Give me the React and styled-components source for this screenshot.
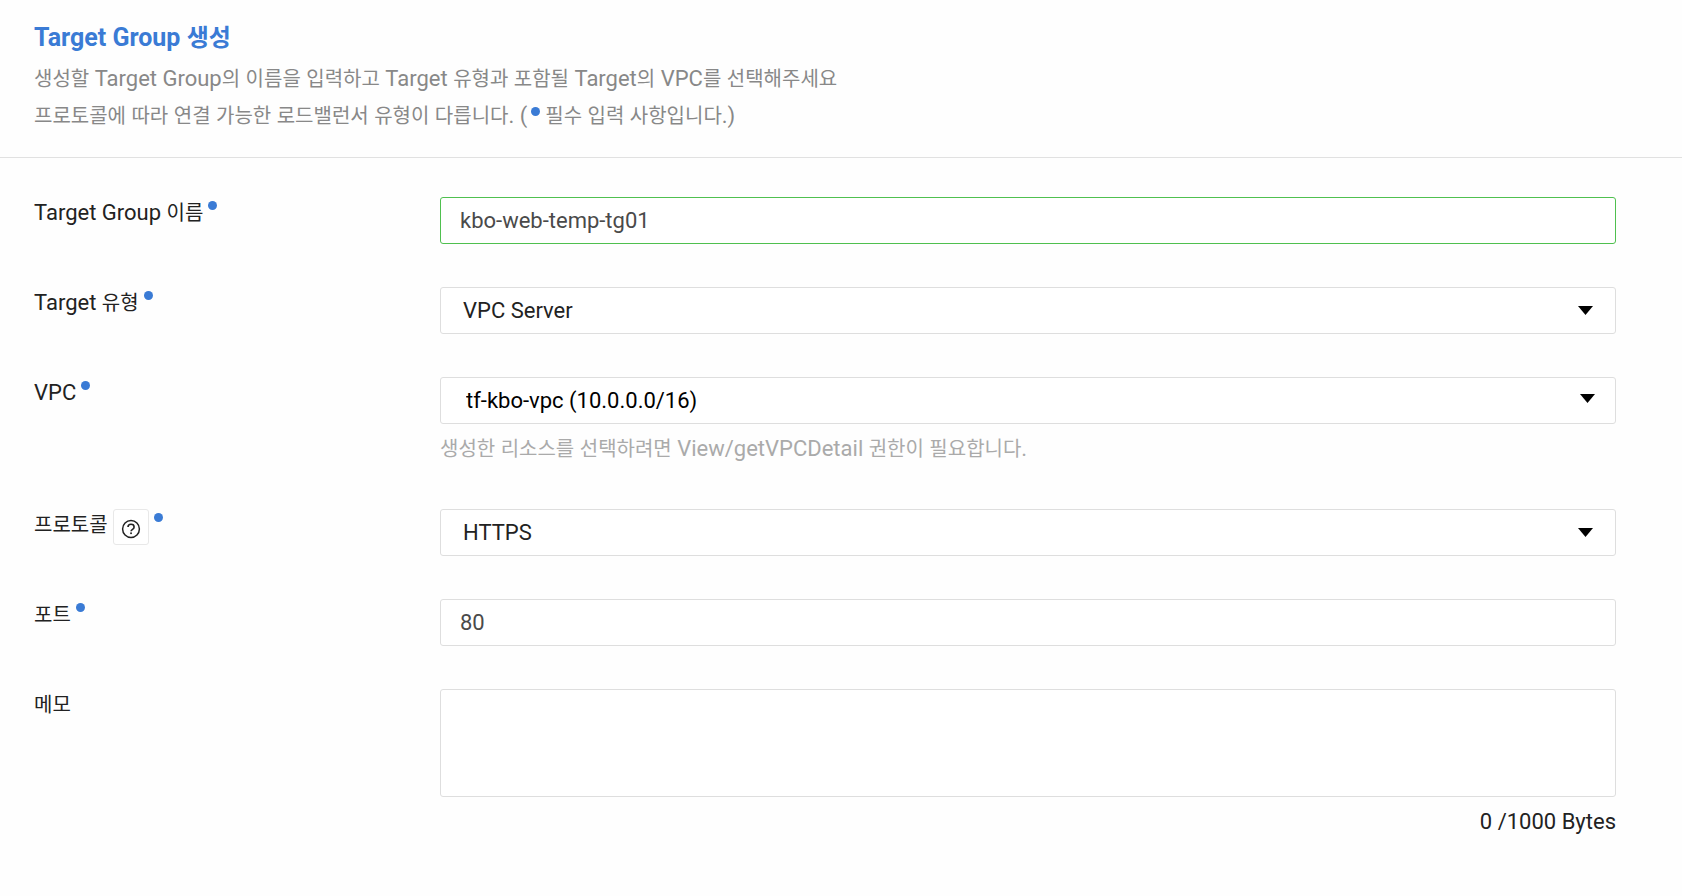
import React from "react";
import styled, { createGlobalStyle } from "styled-components";

const GlobalStyle = createGlobalStyle`
  *, *::before, *::after { box-sizing: border-box; }
  body {
    margin: 0;
    background: #fefefe;
    color: #222;
    font-family: Roboto, "Noto Sans CJK KR", sans-serif;
    font-size: 22px;
    line-height: 32px;
  }
`;

const Hangul = styled.span`
  font-size: ${(p) => (p.$large ? 24 : 20)}px;
  font-weight: ${(p) => (p.$large ? 700 : 400)};
  line-height: 1;
`;

const HANGUL_RUN = /([\uAC00-\uD7A3]+)/;

/* Hangul glyphs are set slightly smaller than the Latin text around them. */
function Mixed({ children, large }) {
  return children
    .split(HANGUL_RUN)
    .map((part, i) =>
      i % 2 ? <Hangul key={i} $large={large}>{part}</Hangul> : part
    );
}

const PageHeader = styled.header`
  padding: 21px 34px 23px;
  border-bottom: 1px solid #e1e1e1;
`;

const Title = styled.h1`
  margin: 0 0 5px;
  color: #3a7bd5;
  font-size: 25px;
  font-weight: 700;
  line-height: 34px;
`;

const Description = styled.p`
  margin: 0;
  color: #888;
  line-height: 37px;
`;

const Dot = styled.span`
  display: inline-block;
  flex: none;
  width: 9px;
  height: 9px;
  border-radius: 50%;
  background: #3a7bd5;
`;

const InlineDot = styled(Dot)`
  margin: 0 5px 0 4px;
  vertical-align: 7px;
`;

const LabelDot = styled(Dot)`
  margin-top: 4px;
`;

const Form = styled.form`
  display: flex;
  flex-direction: column;
  gap: 43px;
  padding: 39px 66px 56px 34px;
`;

const Row = styled.div`
  display: grid;
  grid-template-columns: 406px minmax(0, 1fr);
  align-items: start;
`;

const LabelCell = styled.div`
  display: flex;
  align-items: flex-start;
  gap: 5px;
`;

const Label = styled.label`
  white-space: nowrap;
`;

const HelpButton = styled.button`
  display: flex;
  justify-content: center;
  width: 36px;
  height: 36px;
  padding: 9px 0 0;
  border: 1px solid #e8e8e8;
  border-radius: 3px;
  background: #fff;
  color: #222;
`;

const Control = styled.div`
  display: flex;
  flex-direction: column;
`;

const Input = styled.input`
  width: 100%;
  height: 47px;
  padding: 0 19px;
  border: 1px solid ${(p) => (p.$valid ? "#4fc04f" : "#dedede")};
  border-radius: 3px;
  outline: none;
  background: #fff;
  color: #4a4a4a;
  font: inherit;
`;

const SelectBox = styled.div`
  display: grid;
  align-items: center;

  > * { grid-area: 1 / 1; }
`;

const Select = styled.select`
  appearance: none;
  width: 100%;
  height: 47px;
  padding: 0 50px 0 ${(p) => (p.$dark ? 25 : 22)}px;
  border: 1px solid #dedede;
  border-radius: 3px;
  background: #fff;
  color: ${(p) => (p.$dark ? "#000" : "#222")};
  font: inherit;
`;

const Arrow = styled.svg`
  justify-self: end;
  margin: ${(p) => (p.$dark ? "0 21px 4px 0" : "0 23px 0 0")};
  pointer-events: none;
`;

const Textarea = styled.textarea`
  display: block;
  width: 100%;
  height: 108px;
  padding: 10px 19px;
  border: 1px solid #dedede;
  border-radius: 3px;
  outline: none;
  resize: none;
  background: #fff;
  color: #4a4a4a;
  font: inherit;
`;

const Hint = styled.p`
  margin: 8px 0 0;
  color: #aaa;
  line-height: 34px;
`;

const Counter = styled.output`
  margin-top: 9px;
  text-align: right;
`;

function HelpIcon() {
  return (
    <svg width="20" height="20" viewBox="0 0 20 20" fill="none" aria-hidden="true">
      <circle cx="10" cy="10" r="8.4" stroke="currentColor" strokeWidth="1.5" />
      <path
        d="M7 8.1C7 6.3 8.3 5.3 10 5.3s3.1 1 3.1 2.6c0 1.3-.8 1.9-1.6 2.5-.9.6-1.4 1-1.4 1.9"
        stroke="currentColor"
        strokeWidth="1.6"
      />
      <rect x="9.2" y="13.4" width="1.7" height="1.7" fill="currentColor" />
    </svg>
  );
}

function Field({ id, label, required, help, hint, children }) {
  return (
    <Row>
      <LabelCell>
        <Label htmlFor={id}><Mixed>{label}</Mixed></Label>
        {help && (
          <HelpButton type="button" aria-label={help}><HelpIcon /></HelpButton>
        )}
        {required && <LabelDot />}
      </LabelCell>
      <Control>
        {children}
        {hint && <Hint><Mixed>{hint}</Mixed></Hint>}
      </Control>
    </Row>
  );
}

function Dropdown({ id, value, dark }) {
  return (
    <SelectBox>
      <Select id={id} defaultValue={value} $dark={dark}>
        <option>{value}</option>
      </Select>
      <Arrow $dark={dark} width="15" height="9" viewBox="0 0 15 9" aria-hidden="true">
        <path d="M0 0h15L7.5 9z" fill="#000" />
      </Arrow>
    </SelectBox>
  );
}

export default function App() {
  return (
    <main>
      <GlobalStyle />
      <PageHeader>
        <Title><Mixed large>Target Group 생성</Mixed></Title>
        <Description>
          <Mixed>생성할 Target Group의 이름을 입력하고 Target 유형과 포함될 Target의 VPC를 선택해주세요</Mixed>
        </Description>
        <Description>
          <Mixed>프로토콜에 따라 연결 가능한 로드밸런서 유형이 다릅니다. (</Mixed>
          <InlineDot />
          <Mixed>필수 입력 사항입니다.)</Mixed>
        </Description>
      </PageHeader>
      <Form>
        <Field id="name" label="Target Group 이름" required>
          <Input id="name" type="text" defaultValue="kbo-web-temp-tg01" $valid />
        </Field>
        <Field id="type" label="Target 유형" required>
          <Dropdown id="type" value="VPC Server" />
        </Field>
        <Field
          id="vpc"
          label="VPC"
          required
          hint="생성한 리소스를 선택하려면 View/getVPCDetail 권한이 필요합니다."
        >
          <Dropdown id="vpc" value="tf-kbo-vpc (10.0.0.0/16)" dark />
        </Field>
        <Field id="protocol" label="프로토콜" help="프로토콜 도움말" required>
          <Dropdown id="protocol" value="HTTPS" />
        </Field>
        <Field id="port" label="포트" required>
          <Input id="port" type="text" inputMode="numeric" defaultValue="80" />
        </Field>
        <Field id="memo" label="메모">
          <Textarea id="memo" />
          <Counter htmlFor="memo">0 /1000 Bytes</Counter>
        </Field>
      </Form>
    </main>
  );
}
